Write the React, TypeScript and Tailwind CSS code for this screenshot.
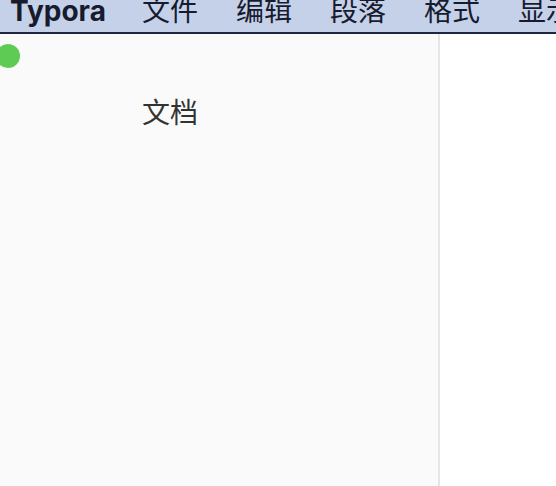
import * as React from 'react';

const menus = ['文件', '编辑', '段落', '格式', '显示'];

export default function App() {
  return (
    <div className="w-[556px] h-[486px] overflow-hidden flex flex-col bg-white font-['Inter','Noto_Sans_CJK_SC',sans-serif]">
      <div className="h-[34px] shrink-0 bg-[#c5d0e9] border-b-2 border-[#1e2640] flex items-start overflow-hidden whitespace-nowrap text-[#161b2e]">
        <div className="flex items-center gap-[38px] pl-[10px] -mt-[3px] leading-[28px]">
          <span className="text-[28px] font-bold mr-[-1px]">Typora</span>
          {menus.map((m) => (
            <span key={m} className="text-[28px] -ml-[1px] mr-[1px]">{m}</span>
          ))}
        </div>
      </div>
      <div className="flex flex-1 min-h-0">
        <div className="w-[440px] shrink-0 bg-[#fafafa] border-r-2 border-[#e6e6e6] flex flex-col">
          <div className="h-[24px] w-[24px] rounded-full bg-[#5ecb55] -ml-[4px] mt-[10px]" />
          <div className="pl-[142px] mt-[25px] text-[28px] text-[#333333] leading-[40px]">文档</div>
        </div>
        <div className="flex-1 bg-white" />
      </div>
    </div>
  );
}
